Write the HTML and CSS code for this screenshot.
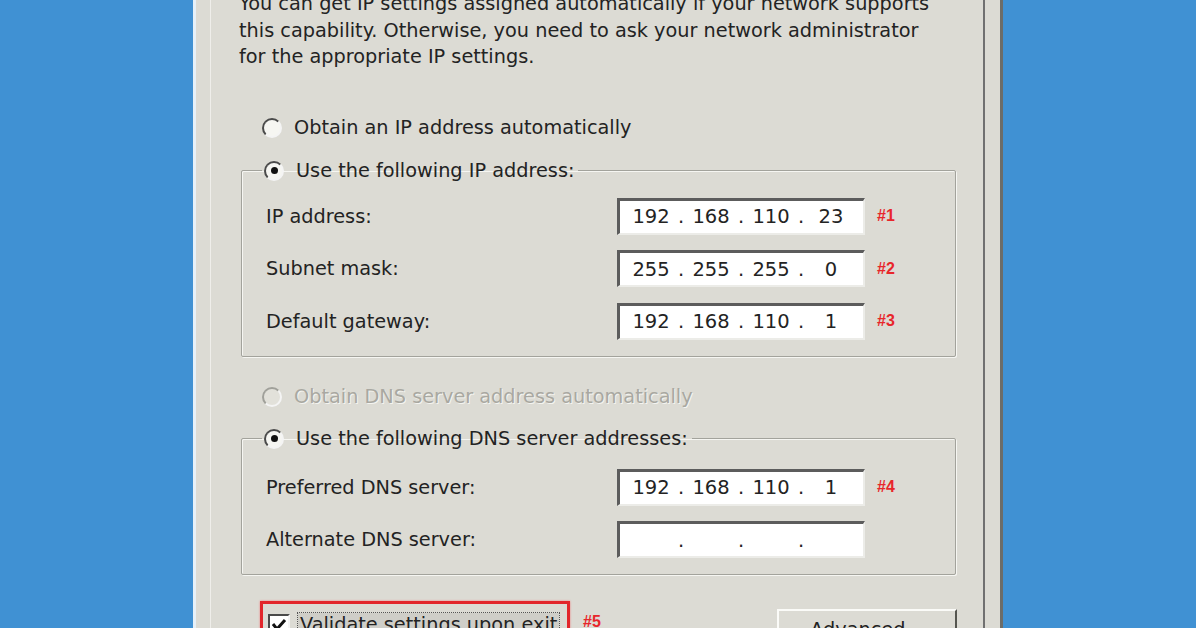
FILE: index.html
```html
<!DOCTYPE html>
<html>
<head>
  <title>Internet Protocol (TCP/IP) Properties</title>
  <link rel="stylesheet" href="styles.css">
</head>
<body>
  <div class="window">
    <div class="page">
      <p class="intro">You can get IP settings assigned automatically if your network supports<br>this capability. Otherwise, you need to ask your network administrator<br>for the appropriate IP settings.</p>

      <div class="option first"><span class="radio"></span>Obtain an IP address automatically</div>

      <fieldset class="group group-ip">
        <legend class="option"><span class="radio checked"></span>Use the following IP address:</legend>
        <div class="row">
          <span class="label">IP address:</span>
          <div class="ip"><span>192</span><i>.</i><span>168</span><i>.</i><span>110</span><i>.</i><span>23</span></div>
          <span class="tag">#1</span>
        </div>
        <div class="row">
          <span class="label">Subnet mask:</span>
          <div class="ip"><span>255</span><i>.</i><span>255</span><i>.</i><span>255</span><i>.</i><span>0</span></div>
          <span class="tag">#2</span>
        </div>
        <div class="row">
          <span class="label">Default gateway:</span>
          <div class="ip"><span>192</span><i>.</i><span>168</span><i>.</i><span>110</span><i>.</i><span>1</span></div>
          <span class="tag">#3</span>
        </div>
      </fieldset>

      <div class="option disabled"><span class="radio"></span>Obtain DNS server address automatically</div>

      <fieldset class="group group-dns">
        <legend class="option"><span class="radio checked"></span>Use the following DNS server addresses:</legend>
        <div class="row">
          <span class="label">Preferred DNS server:</span>
          <div class="ip"><span>192</span><i>.</i><span>168</span><i>.</i><span>110</span><i>.</i><span>1</span></div>
          <span class="tag">#4</span>
        </div>
        <div class="row">
          <span class="label">Alternate DNS server:</span>
          <div class="ip"><span></span><i>.</i><span></span><i>.</i><span></span><i>.</i><span></span></div>
        </div>
      </fieldset>

      <div class="footer">
        <div class="highlight">
          <span class="checkbox">
            <svg width="16" height="14" viewBox="0 0 16 14"><polyline points="2,6 6,11 14,2" fill="none" stroke="#111" stroke-width="3"/></svg>
          </span>
          <span class="focus">Validate settings upon exit</span>
        </div>
        <span class="tag tag-check">#5</span>
        <button class="btn-advanced">Advanced...</button>
      </div>
    </div>
  </div>
</body>
</html>
```

FILE: styles.css
```css
body {
  margin: 0;
  width: 1196px;
  height: 628px;
  overflow: hidden;
  background-color: #4091d3;
  font-family: "DejaVu Sans", Verdana, sans-serif;
  font-size: 19.3px;
  color: #232323;
}

.window {
  margin-left: 193px;
  width: 775px;
  height: 628px;
  border-left: 3px solid #e6f0f8;
  border-right: 3px solid #6c6c68;
  background-color: #dcdbd4;
  padding-left: 14px;
  padding-right: 15px;
  display: flex;
}

.page {
  flex: 1;
  border-left: 1px solid #efeeea;
  border-right: 2px solid #707070;
  padding-left: 28px;
  padding-right: 26px;
  overflow: hidden;
}

.intro {
  margin: -9px 0 0 0;
  line-height: 26.5px;
  white-space: nowrap;
}

.option {
  display: flex;
  align-items: center;
  height: 26px;
  line-height: 26px;
  white-space: nowrap;
}

.option.first {
  margin-top: 44px;
  margin-left: 23px;
}

.radio {
  width: 16px;
  height: 16px;
  border-radius: 50%;
  border: 2px solid;
  border-color: #4a4a4a #f4f4f4 #f4f4f4 #4a4a4a;
  background-color: #f6f6f2;
  margin-right: 12px;
  position: relative;
  flex-shrink: 0;
}

.radio.checked::after {
  content: "";
  position: absolute;
  left: 4.5px;
  top: 4.5px;
  width: 7px;
  height: 7px;
  border-radius: 50%;
  background-color: #111;
}

.disabled {
  margin-top: 27px;
  margin-left: 23px;
  color: #a9a8a1;
  text-shadow: 1px 1px 0 #f4f4f0;
}

.disabled .radio {
  border-color: #a0a09a #f4f4f4 #f4f4f4 #a0a09a;
  background-color: #e2e1da;
}

.group {
  margin: 17px 0 0 2px;
  width: 715px;
  border: 1px solid #a3a39c;
  box-shadow: 1px 1px 0 #f6f6f2, inset 1px 1px 0 #f6f6f2;
  border-radius: 2px;
  padding: 0 0 16px 24px;
  box-sizing: border-box;
}

.group legend {
  margin-left: -4px;
  padding: 0 4px 0 2px;
}

.group-ip {
  padding-top: 14px;
}

.group-dns {
  margin-top: 16px;
  padding-top: 17px;
}

.row {
  display: flex;
  align-items: center;
  height: 37px;
  margin-bottom: 15.5px;
}

.row:last-child {
  margin-bottom: 0;
}

.label {
  width: 351px;
}

.ip {
  display: flex;
  width: 248px;
  height: 37px;
  box-sizing: border-box;
  background-color: #fff;
  border-top: 3px solid #5c5c5c;
  border-left: 3px solid #5c5c5c;
  border-right: 2px solid #ecece8;
  border-bottom: 2px solid #ecece8;
  padding-left: 7px;
  align-items: center;
  font-size: 19.5px;
}

.ip span {
  width: 48px;
  text-align: center;
}

.ip i {
  font-style: normal;
  width: 12px;
  text-align: center;
}

.tag {
  margin-left: 12px;
  color: #e8262b;
  font-family: "Liberation Sans", Arial, sans-serif;
  font-size: 16px;
  font-weight: bold;
}

.footer {
  display: flex;
  align-items: flex-start;
  margin-top: 26px;
  margin-left: 21px;
}

.highlight {
  display: flex;
  align-items: center;
  width: 310px;
  height: 40px;
  border: 3px solid #e2262b;
  box-shadow: 0 0 2px #f08080;
  padding-left: 5px;
  box-sizing: border-box;
  flex-shrink: 0;
}

.checkbox {
  width: 18px;
  height: 18px;
  border-top: 2px solid #4a4a4a;
  border-left: 2px solid #4a4a4a;
  border-right: 2px solid #f4f4f4;
  border-bottom: 2px solid #f4f4f4;
  background-color: #fff;
  display: flex;
  align-items: center;
  justify-content: center;
  margin-top: 8px;
  flex-shrink: 0;
}

.focus {
  margin-left: 8px;
  margin-top: 8px;
  padding: 0 2px;
  outline: 1px dotted #555;
  background-color: #cfcec8;
  line-height: 24px;
  white-space: nowrap;
}

.tag-check {
  margin-left: 13px;
  margin-top: 12px;
}

.btn-advanced {
  margin-left: auto;
  margin-top: 8px;
  width: 180px;
  height: 40px;
  font-family: "DejaVu Sans", Verdana, sans-serif;
  font-size: 19.3px;
  color: #222;
  background-color: #dcdbd4;
  border-top: 2px solid #fbfbf8;
  border-left: 2px solid #fbfbf8;
  border-right: 2px solid #55554f;
  border-bottom: 2px solid #55554f;
  padding: 0;
}
```
